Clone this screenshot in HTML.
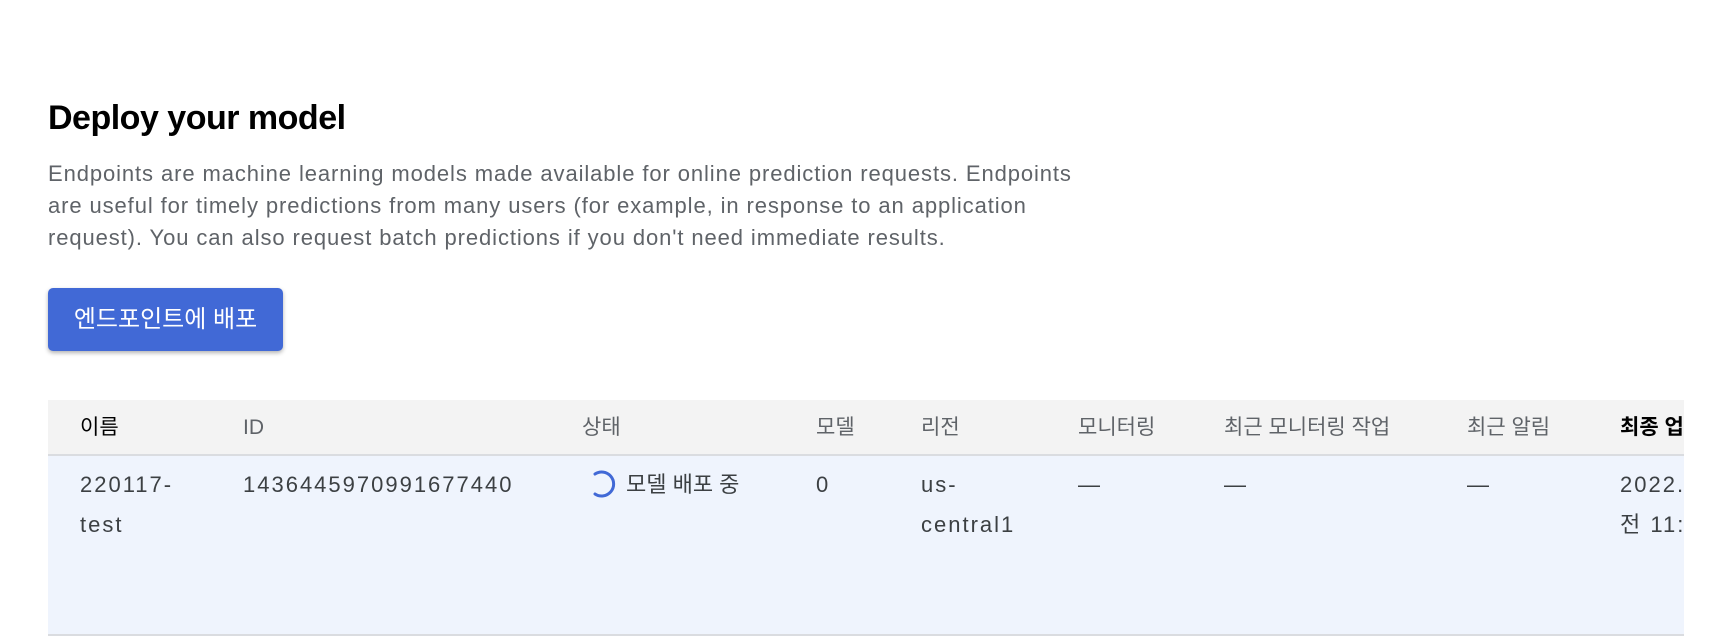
<!DOCTYPE html>
<html><head><meta charset="utf-8"><style>
*{margin:0;padding:0;box-sizing:border-box}
body{width:1716px;height:636px;overflow:hidden;background:#fff;font-family:"Liberation Sans","Noto Sans CJK KR",sans-serif;position:relative}
.a{position:absolute;white-space:nowrap}
h1{position:absolute;left:48px;top:99px;font-size:34px;font-weight:bold;color:#000;letter-spacing:-0.5px}
.p{position:absolute;left:48px;top:158px;font-size:22px;line-height:32px;color:#5f6368;width:1300px;letter-spacing:0.9px}
.btn{position:absolute;left:48px;top:288px;width:235px;height:63px;background:#4169d6;border-radius:5px;box-shadow:0 2px 4px rgba(0,0,0,.3);color:#fff;font-size:24px;text-align:center;line-height:63px}
.hd{position:absolute;left:48px;top:400px;width:1636px;height:56px;background:#f3f3f3;border-bottom:2px solid #dadce0}
.row{position:absolute;left:48px;top:456px;width:1636px;height:180px;background:#eff4fd;border-bottom:2px solid #dadce0}
.h{top:400px;height:56px;line-height:56px;font-size:21px;color:#5f6368}
.c{font-size:22px;color:#3c4043;top:465px;line-height:40px}
.n{letter-spacing:2px}
</style></head><body>
<h1>Deploy your model</h1>
<div class="p">Endpoints are machine learning models made available for online prediction requests. Endpoints<br>are useful for timely predictions from many users (for example, in response to an application<br>request). You can also request batch predictions if you don't need immediate results.</div>
<div class="btn">엔드포인트에 배포</div>
<div class="hd"></div>
<div class="row"></div>
<div class="a h" style="left:80px;color:#000">이름</div>
<div class="a h" style="left:243px">ID</div>
<div class="a h" style="left:582px">상태</div>
<div class="a h" style="left:816px">모델</div>
<div class="a h" style="left:921px">리전</div>
<div class="a h" style="left:1078px">모니터링</div>
<div class="a h" style="left:1224px">최근 모니터링 작업</div>
<div class="a h" style="left:1467px">최근 알림</div>
<div class="a h" style="left:1620px;color:#000;font-weight:bold">최종 업</div>
<div class="a c n" style="left:80px">220117-<br>test</div>
<div class="a c n" style="left:243px">1436445970991677440</div>
<svg class="a" style="left:587px;top:468px" width="32" height="32" viewBox="0 0 32 32"><path d="M8 6 A12 12 0 1 1 8 26" fill="none" stroke="#4169d6" stroke-width="3" stroke-linecap="round"/></svg>
<div class="a c" style="left:626px">모델 배포 중</div>
<div class="a c n" style="left:816px">0</div>
<div class="a c n" style="left:921px">us-<br>central1</div>
<div class="a c" style="left:1078px">—</div>
<div class="a c" style="left:1224px">—</div>
<div class="a c" style="left:1467px">—</div>
<div class="a c n" style="left:1620px;width:64px;overflow:hidden">2022.<br>전 11:</div>
</body></html>
